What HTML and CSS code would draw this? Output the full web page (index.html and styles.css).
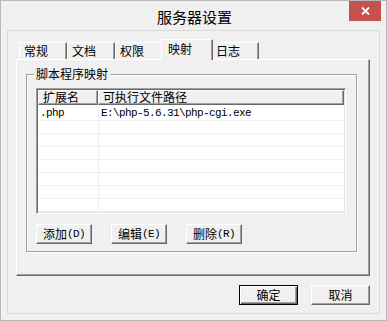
FILE: index.html
```html
<!DOCTYPE html>
<html>
<head>
<meta charset="utf-8">
<title>服务器设置</title>
<link rel="stylesheet" href="styles.css">
</head>
<body>
<div class="window">
  <div class="titlebar">
    <span class="spacer"></span>
    <span class="title">服务器设置</span>
    <span class="close"><svg width="9" height="8" viewBox="0 0 9 8"><path d="M1 0.5L8 7.5M8 0.5L1 7.5" stroke="#fff" stroke-width="1.8"/></svg></span>
  </div>
  <div class="client">
    <div class="tabs">
      <div class="tab">常规</div>
      <div class="tab">文档</div>
      <div class="tab">权限</div>
      <div class="tab active">映射</div>
      <div class="tab">日志</div>
    </div>
    <div class="panel">
      <div class="group">
        <div class="legend">脚本程序映射</div>
        <div class="list">
          <div class="head">
            <div class="hcell c1">扩展名</div>
            <div class="hcell c2">可执行文件路径</div>
          </div>
          <div class="row first"><div class="cell c1"><span class="lat">.php</span></div><div class="cell c2"><span class="lat">E:\php-5.6.31\php-cgi.exe</span></div></div>
          <div class="row"><div class="cell c1"></div><div class="cell c2"></div></div>
          <div class="row"><div class="cell c1"></div><div class="cell c2"></div></div>
          <div class="row"><div class="cell c1"></div><div class="cell c2"></div></div>
          <div class="row"><div class="cell c1"></div><div class="cell c2"></div></div>
          <div class="row"><div class="cell c1"></div><div class="cell c2"></div></div>
          <div class="row"><div class="cell c1"></div><div class="cell c2"></div></div>
          <div class="row"><div class="cell c1"></div><div class="cell c2"></div></div>
        </div>
        <div class="btns">
          <button class="btn">添加<span class="lat">(D)</span></button>
          <button class="btn">编辑<span class="lat">(E)</span></button>
          <button class="btn">删除<span class="lat">(R)</span></button>
        </div>
      </div>
    </div>
    <div class="footer">
      <button class="btn dlg default">确定</button>
      <button class="btn dlg">取消</button>
    </div>
  </div>
</div>
</body>
</html>
```

FILE: styles.css
```css
* {
  box-sizing: border-box;
}

body {
  margin: 0;
  background: #ffffff;
  font-family: "Noto Sans CJK SC", sans-serif;
  font-size: 12px;
  color: #000;
}

.window {
  width: 387px;
  height: 321px;
  background: #f0f0f0;
  border: 1px solid #b9b9b9;
  display: flex;
  flex-direction: column;
}

.titlebar {
  height: 29px;
  display: grid;
  grid-template-columns: 1fr auto 1fr;
  align-items: start;
}

.title {
  font-size: 15px;
  line-height: 15px;
  margin-top: 8px;
  color: #000;
  padding-left: 2px;
}

.close {
  justify-self: end;
  margin-right: 5px;
  width: 32px;
  height: 20px;
  background: #c75050;
  display: flex;
  align-items: center;
  justify-content: center;
}

.client {
  flex: 1;
  margin: 0 6px 6px 6px;
  border: 1px solid #dadada;
  background: #f0f0f0;
  padding: 8px 0 0 8px;
  display: flex;
  flex-direction: column;
}

.tabs {
  height: 20px;
  display: flex;
  align-items: flex-end;
  padding-left: 3px;
  position: relative;
  z-index: 1;
}

.tab {
  width: 48px;
  height: 17px;
  border-top: 1px solid #fff;
  border-left: 1px solid #fff;
  border-right: 1px solid #696969;
  box-shadow: inset -1px 0 0 #a0a0a0;
  background: #f0f0f0;
  padding-left: 4px;
  line-height: 15px;
  white-space: nowrap;
}

.tab.active {
  width: 52px;
  height: 21px;
  margin: 0 -2px -1px -2px;
  padding-left: 6px;
  line-height: 18px;
  position: relative;
  z-index: 2;
}

.panel {
  width: 354px;
  height: 217px;
  border-top: 1px solid #fff;
  border-left: 1px solid #fff;
  border-right: 1px solid #696969;
  border-bottom: 1px solid #696969;
  box-shadow: inset -1px -1px 0 #a0a0a0;
  padding: 14px 0 0 9px;
}

.group {
  width: 331px;
  height: 178px;
  border: 1px solid #a0a0a0;
  box-shadow: 1px 1px 0 #fff, inset 1px 1px 0 #fff;
  padding: 0 0 0 9px;
  display: flex;
  flex-direction: column;
}

.legend {
  align-self: flex-start;
  margin: -8px 0 0 -2px;
  padding: 0 2px;
  height: 14px;
  line-height: 14px;
  background: #f0f0f0;
}

.list {
  margin-top: 7px;
  width: 310px;
  height: 126px;
  background: #fff;
  border-top: 1px solid #a0a0a0;
  border-left: 1px solid #a0a0a0;
  border-right: 1px solid #fff;
  border-bottom: 1px solid #fff;
  box-shadow: inset 1px 1px 0 #696969, inset -1px -1px 0 #e3e3e3;
  padding: 1px;
  overflow: hidden;
}

.head {
  display: flex;
  height: 15px;
}

.hcell {
  height: 15px;
  background: #f0f0f0;
  border-top: 1px solid #fff;
  border-left: 1px solid #fff;
  border-right: 1px solid #696969;
  border-bottom: 1px solid #696969;
  box-shadow: inset -1px -1px 0 #a0a0a0;
  line-height: 12px;
  white-space: nowrap;
}

.hcell.c1 {
  width: 60px;
  padding-left: 4px;
}

.hcell.c2 {
  width: 246px;
  padding-left: 4px;
}

.row {
  display: flex;
  height: 13px;
  border-bottom: 1px solid #f0f0f0;
}

.row.first {
  height: 16px;
}

.cell {
  height: 100%;
  white-space: nowrap;
  display: flex;
  align-items: center;
}

.cell.c1 {
  width: 61px;
  border-right: 1px solid #f0f0f0;
  padding-left: 2px;
}

.cell.c2 {
  flex: 1;
  padding-left: 2px;
}

.lat {
  font-family: "Liberation Mono", monospace;
  font-size: 11px;
  letter-spacing: -0.6px;
}

.btns {
  display: flex;
  gap: 19px;
  margin-top: 10px;
}

.btn {
  width: 56px;
  height: 20px;
  margin: 0;
  padding: 0;
  background: #f0f0f0;
  border-top: 1px solid #fff;
  border-left: 1px solid #fff;
  border-right: 1px solid #696969;
  border-bottom: 1px solid #696969;
  box-shadow: inset -1px -1px 0 #a0a0a0;
  font-family: "Noto Sans CJK SC", sans-serif;
  font-size: 12px;
  line-height: 16px;
  color: #000;
  display: flex;
  align-items: center;
  justify-content: center;
}

.footer {
  width: 354px;
  display: flex;
  justify-content: flex-end;
  gap: 13px;
  margin-top: 9px;
}

.btn.dlg {
  width: 59px;
}

.btn.default {
  border: 1px solid #000;
  box-shadow: inset 1px 1px 0 #fff, inset -1px -1px 0 #696969, inset -2px -2px 0 #a0a0a0;
}
```
